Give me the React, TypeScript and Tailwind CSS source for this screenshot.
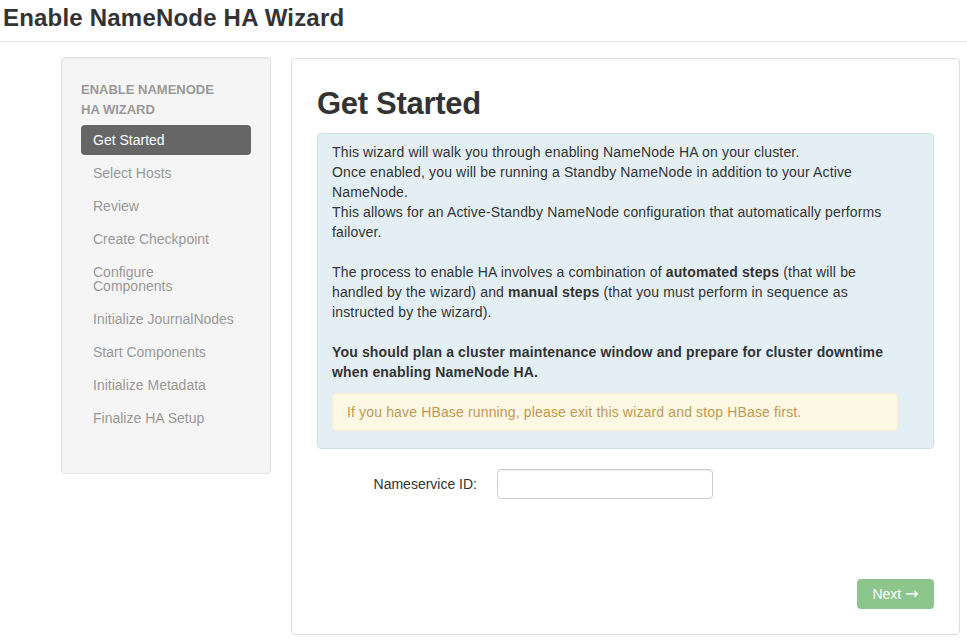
const steps = [
  "Get Started",
  "Select Hosts",
  "Review",
  "Create Checkpoint",
  "Configure Components",
  "Initialize JournalNodes",
  "Start Components",
  "Initialize Metadata",
  "Finalize HA Setup",
];

function Sidebar() {
  return (
    <div className="w-[210px] shrink-0 self-start rounded-[4px] border border-[#e3e3e3] bg-[#f5f5f5] pl-[19px] pr-[19px] pt-[22px] pb-[40px] shadow-[inset_0_1px_1px_rgba(0,0,0,0.05)]">
      <div className="text-[13px] font-bold uppercase leading-[20px] text-[#999]">
        Enable NameNode
        <br />
        HA Wizard
      </div>
      <ul className="mt-[5px] flex flex-col gap-[3px]">
        {steps.map((s, i) => (
          <li
            key={s}
            className={
              i === 0
                ? "rounded-[4px] bg-[#666] px-[12px] py-[8px] text-[14px] leading-[14px] text-white"
                : "px-[12px] py-[8px] text-[14px] leading-[14px] text-[#999]"
            }
          >
            {s === "Configure Components" ? (
              <>
                Configure
                <br />
                Components
              </>
            ) : (
              s
            )}
          </li>
        ))}
      </ul>
    </div>
  );
}

export default function App() {
  return (
    <div
      className="min-h-screen bg-white text-[#333]"
      style={{ fontFamily: '"Liberation Sans", Arial, sans-serif' }}
    >
      <div className="h-[42px] border-b border-[#e5e5e5] px-[3px] pt-[1px]">
        <h2 className="text-[24px] font-bold leading-[34px] tracking-[0.2px] text-[#333]">
          Enable NameNode HA Wizard
        </h2>
      </div>

      <div className="flex gap-[20px] pl-[61px] pr-[7px] pt-[15px]">
        <Sidebar />

        <div className="mt-px flex-1 rounded-[4px] border border-[#ddd] bg-white px-[25px] pt-[25px] pb-[25px]">
          <h1 className="text-[31px] font-bold leading-[40px] tracking-[-0.3px] text-[#333]">
            Get Started
          </h1>

          <div className="mt-[9px] rounded-[4px] border border-[#cfdfe7] bg-[#e4eff5] pt-[8px] pb-[7px] pl-[14px] pr-[35px] text-[14px] leading-[20px] tracking-[0.15px] text-[#333]">
            <p>
              This wizard will walk you through enabling NameNode HA on your cluster.
              <br />
              Once enabled, you will be running a Standby NameNode in addition to your Active
              <br />
              NameNode.
              <br />
              This allows for an Active-Standby NameNode configuration that automatically performs
              <br />
              failover.
            </p>
            <p className="mt-[20px]">
              The process to enable HA involves a combination of <b>automated steps</b> (that will be
              <br />
              handled by the wizard) and <b>manual steps</b> (that you must perform in sequence as
              <br />
              instructed by the wizard).
            </p>
            <p className="mt-[20px] font-bold">
              You should plan a cluster maintenance window and prepare for cluster downtime
              <br />
              when enabling NameNode HA.
            </p>
            <div className="mt-[11px] mb-[10px] rounded-[4px] border border-[#fbeed5] bg-[#fcf8e3] px-[14px] py-[8px] text-[#c09853]">
              If you have HBase running, please exit this wizard and stop HBase first.
            </div>
          </div>

          <div className="mt-[20px] flex items-center">
            <label className="w-[160px] text-right text-[14px] leading-[20px] text-[#333]">
              Nameservice ID:
            </label>
            <input
              type="text"
              className="ml-[20px] h-[30px] w-[216px] rounded-[4px] border border-[#ccc] bg-white px-[6px] text-[14px] shadow-[inset_0_1px_1px_rgba(0,0,0,0.075)] outline-none"
            />
          </div>

          <div className="mt-[80px] flex justify-end">
            <button className="flex h-[30px] w-[77px] items-center justify-center gap-[4px] rounded-[4px] bg-[#8dc68d] text-[14px] leading-[20px] text-white">
              Next
              <span style={{ fontFamily: '"DejaVu Sans", sans-serif' }} className="text-[16px] leading-[20px]">
                →
              </span>
            </button>
          </div>
        </div>
      </div>
    </div>
  );
}
